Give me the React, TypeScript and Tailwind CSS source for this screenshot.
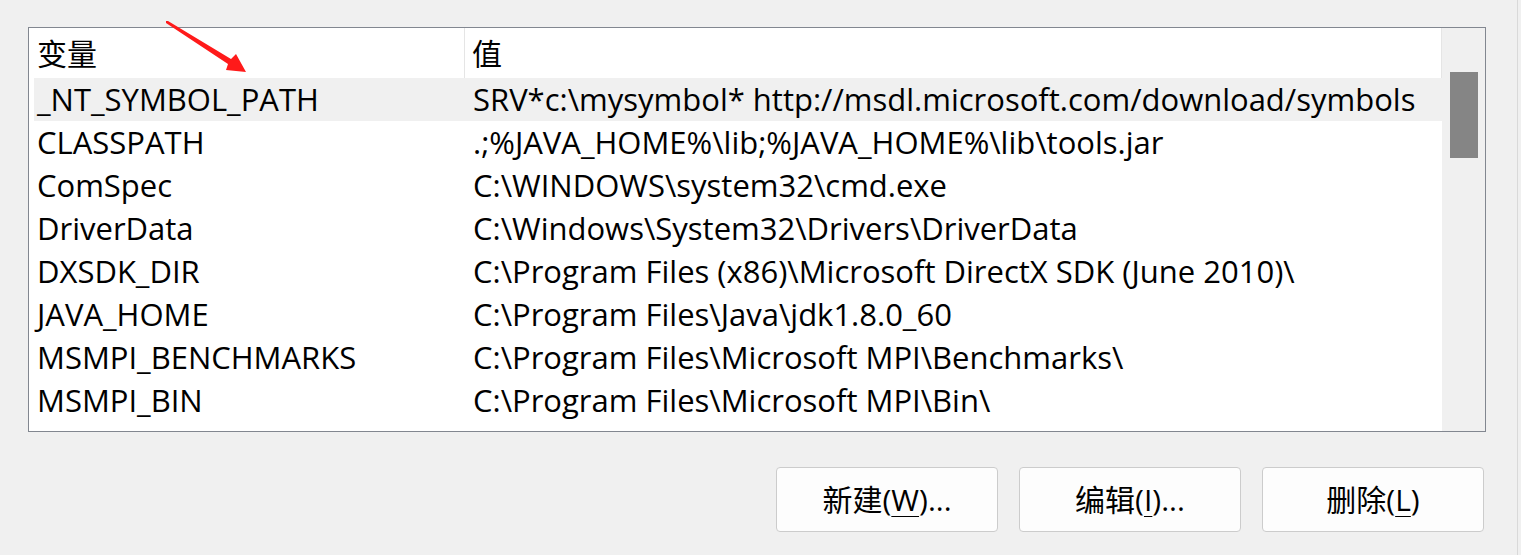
import React from "react";

const rows: [string, string][] = [
  ["_NT_SYMBOL_PATH", "SRV*c:\\mysymbol* http://msdl.microsoft.com/download/symbols"],
  ["CLASSPATH", ".;%JAVA_HOME%\\lib;%JAVA_HOME%\\lib\\tools.jar"],
  ["ComSpec", "C:\\WINDOWS\\system32\\cmd.exe"],
  ["DriverData", "C:\\Windows\\System32\\Drivers\\DriverData"],
  ["DXSDK_DIR", "C:\\Program Files (x86)\\Microsoft DirectX SDK (June 2010)\\"],
  ["JAVA_HOME", "C:\\Program Files\\Java\\jdk1.8.0_60"],
  ["MSMPI_BENCHMARKS", "C:\\Program Files\\Microsoft MPI\\Benchmarks\\"],
  ["MSMPI_BIN", "C:\\Program Files\\Microsoft MPI\\Bin\\"],
];

const font = { fontFamily: '"Open Sans", "Noto Sans CJK SC", sans-serif' };

function Btn({ label, hot, tail }: { label: string; hot: string; tail: string }) {
  return (
    <button className="w-[222px] h-[65px] rounded-[4px] border border-[#cccccc] bg-[#fdfdfd] text-[30px] text-black flex items-center justify-center leading-none">
      <span>
        {label}(<span className="underline underline-offset-[5px] decoration-1">{hot}</span>){tail}
      </span>
    </button>
  );
}

export default function App() {
  return (
    <div
      className="relative w-[1521px] h-[555px] bg-[#f0f0f0] flex overflow-hidden text-black"
      style={{ ...font }}
    >
      <div className="w-[1517px] pl-[28px] pt-[27px]">
        <div className="w-[1458px] h-[405px] border border-[#828790] bg-white flex">
          <div className="flex-1 flex flex-col">
            <div className="h-[50px] flex shrink-0 text-[30px]">
              <div className="w-[436px] pl-[8px] flex items-center border-r border-[#e5e5e5]">变量</div>
              <div className="flex-1 pl-[7px] flex items-center border-r border-[#e5e5e5]">值</div>
            </div>
            {rows.map(([k, v], i) => (
              <div
                key={k}
                className={
                  "h-[43px] flex items-center shrink-0 text-[31px] ml-[5px] " +
                  (i === 0 ? "bg-[#f0f0f0]" : "")
                }
              >
                <div className="w-[431px] pl-[3px] whitespace-nowrap">{k}</div>
                <div className="flex-1 pl-[8px] whitespace-nowrap">{v}</div>
              </div>
            ))}
          </div>
          <div className="w-[43px] bg-[#f0f0f0] pt-[44px] flex justify-center">
            <div className="w-[28px] h-[86px] bg-[#858585]" />
          </div>
        </div>
        <div className="mt-[35px] w-[1458px] pr-[2px] flex justify-end gap-[21px]">
          <Btn label="新建" hot="W" tail="..." />
          <Btn label="编辑" hot="I" tail="..." />
          <Btn label="删除" hot="L" tail="" />
        </div>
      </div>
      <div className="w-px h-full bg-[#d9d9d9]" />
      <svg className="absolute left-0 top-0 pointer-events-none" width="300" height="90">
        <polygon points="166,21 168,21 231,59 236,54 246,72 226,70 228,64 166,23" fill="#ff1a1a" />
      </svg>
    </div>
  );
}
